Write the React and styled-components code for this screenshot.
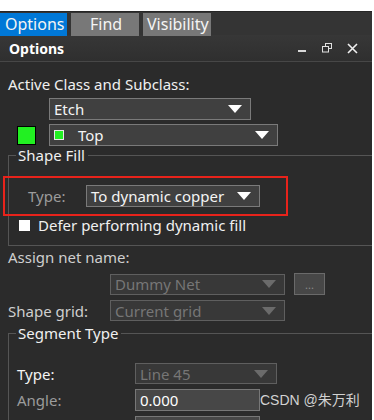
import React from "react";
import styled, { createGlobalStyle } from "styled-components";

const Global = createGlobalStyle`
  body {
    margin: 0;
    background: #ffffff;
    font-family: "Noto Sans", "Open Sans", sans-serif;
  }
`;

const Window = styled.div`
  position: relative;
  width: 372px;
  height: 409px;
  margin-top: 11px;
  background: #2b2b2b;
  overflow: hidden;
  color: #f0f0f0;
  font-size: 14px;
`;

const TabBar = styled.div`
  display: flex;
  gap: 4px;
  height: 24px;
  padding-top: 1px;
  box-sizing: border-box;
  background: #343434;
  border-top: 1px solid #262626;
`;

const Tab = styled.div`
  width: ${p => p.w}px;
  height: 23px;
  box-sizing: border-box;
  padding-left: ${p => p.pad}px;
  line-height: 23px;
  font-size: 16px;
  color: #f4f4f4;
  background: ${p => (p.active ? "#0078d7" : "#787878")};
`;

const TitleBar = styled.div`
  display: flex;
  align-items: center;
  height: 26px;
  padding: 0 14px 0 9px;
  background: linear-gradient(#373737, #2f2f2f);
  border-bottom: 1px solid #474747;
`;

const Title = styled.div`
  flex: 1;
  font-weight: bold;
  font-size: 14px;
  color: #ffffff;
`;

const TitleIcons = styled.div`
  display: flex;
  align-items: center;
  gap: 15px;
  svg {
    display: block;
  }
`;

const Body = styled.div`
  padding: 0;
`;

const Label = styled.div`
  height: 20px;
  line-height: 20px;
  padding-left: 8px;
  margin-top: ${p => p.mt || 0}px;
  font-size: 15px;
  color: ${p => p.color || "#f0f0f0"};
`;

const Row = styled.div`
  display: flex;
  align-items: center;
  gap: ${p => p.gap || 0}px;
  margin-top: ${p => p.mt || 0}px;
  padding-left: ${p => p.pl || 0}px;
`;

const Select = styled.div`
  display: flex;
  align-items: center;
  width: ${p => p.w}px;
  height: ${p => p.h || 22}px;
  box-sizing: border-box;
  padding: 0 8px 0 4px;
  border: 1px solid ${p => (p.disabled ? "#5f5f5f" : "#7a7a7a")};
  background: ${p => (p.disabled ? "#383838" : "#404040")};
  color: ${p => (p.disabled ? "#767676" : "#f4f4f4")};
  font-size: 15px;
  white-space: nowrap;
  span {
    flex: 1;
  }
`;

const Arrow = styled.i`
  width: 0;
  height: 0;
  border-left: 7px solid transparent;
  border-right: 7px solid transparent;
  border-top: 8px solid ${p => (p.disabled ? "#6b6b6b" : "#ffffff")};
`;

const Swatch = styled.div`
  width: ${p => p.size}px;
  height: ${p => p.size}px;
  box-sizing: border-box;
  border: ${p => p.bw}px solid ${p => p.bc};
  background: #22f022;
  flex: none;
`;

const Group = styled.fieldset`
  margin: ${p => p.mt}px 0 0 8px;
  padding: 0 0 ${p => p.pb || 0}px 0;
  border: 1px solid #555555;
  border-right: none;
  min-width: 0;
`;

const Legend = styled.legend`
  margin-left: 7px;
  padding: 0 3px 0 2px;
  line-height: 20px;
  font-size: 15px;
  color: #f0f0f0;
`;

const Highlight = styled.div`
  display: flex;
  align-items: center;
  width: 285px;
  height: 40px;
  box-sizing: border-box;
  margin: 11px 0 0 -6px;
  padding-left: 23px;
  border: 2px solid #e8231b;
  font-size: 15px;
`;

const FieldName = styled.div`
  width: ${p => p.w}px;
  color: ${p => p.color || "#f4f4f4"};
  font-size: 15px;
  flex: none;
`;

const CheckRow = styled.div`
  display: flex;
  align-items: center;
  gap: 8px;
  height: 18px;
  padding-left: 10px;
  font-size: 15px;
`;

const Check = styled.div`
  width: 11px;
  height: 11px;
  background: #ffffff;
`;

const DotsButton = styled.div`
  width: 31px;
  height: 22px;
  box-sizing: border-box;
  border: 1px solid #6a6a6a;
  background: #474747;
  color: #8a8a8a;
  font-size: 11px;
  text-align: center;
  line-height: 22px;
`;

const Input = styled.div`
  width: 125px;
  height: 22px;
  box-sizing: border-box;
  padding-left: 4px;
  border: 1px solid #777777;
  background: #474747;
  color: #ffffff;
  font-size: 15px;
  line-height: 20px;
`;

const Watermark = styled.div`
  position: absolute;
  left: 260px;
  top: 378px;
  font-family: "Liberation Sans", "Noto Sans CJK SC", sans-serif;
  font-size: 14px;
  color: #d2d2d2;
`;

const Minimize = () => (
  <svg width="9" height="10" viewBox="0 0 9 10">
    <rect x="0" y="7" width="8" height="2" fill="#d8d8d8" />
  </svg>
);

const Restore = () => (
  <svg width="10" height="10" viewBox="0 0 10 10">
    <rect x="3.5" y="0.5" width="6" height="5" fill="none" stroke="#e0e0e0" />
    <rect x="0.5" y="3.5" width="6" height="5.5" fill="#303030" stroke="#e0e0e0" />
  </svg>
);

const Close = () => (
  <svg width="11" height="11" viewBox="0 0 11 11">
    <path d="M1 1 L10 10 M10 1 L1 10" stroke="#f0f0f0" strokeWidth="1.6" />
  </svg>
);

const DIM = "#9c9c9c";
const SOFT = "#cfcfcf";

export default function App() {
  return (
    <>
      <Global />
      <Window>
        <TabBar>
          <Tab active w={67} pad={5}>Options</Tab>
          <Tab w={68} pad={19}>Find</Tab>
          <Tab w={68} pad={4}>Visibility</Tab>
        </TabBar>
        <TitleBar>
          <Title>Options</Title>
          <TitleIcons>
            <Minimize />
            <Restore />
            <Close />
          </TitleIcons>
        </TitleBar>
        <Body>
          <Label mt={12}>Active Class and Subclass:</Label>
          <Row mt={4} pl={49}>
            <Select w={202}>
              <span>Etch</span>
              <Arrow />
            </Select>
          </Row>
          <Row mt={4} pl={17} gap={13}>
            <Swatch size={19} bw={1} bc="#000" />
            <Select w={229}>
              <Swatch size={10} bw={1} bc="#e8e8e8" />
              <span style={{ paddingLeft: 14 }}>Top</span>
              <Arrow />
            </Select>
          </Row>

          <Group mt={-1} pb={11}>
            <Legend>Shape Fill</Legend>
            <Highlight>
              <FieldName w={58} color={DIM}>Type:</FieldName>
              <Select w={174}>
                <span>To dynamic copper</span>
                <Arrow />
              </Select>
            </Highlight>
            <CheckRow>
              <Check />
              Defer performing dynamic fill
            </CheckRow>
          </Group>

          <Label mt={1} color={SOFT}>Assign net name:</Label>
          <Row mt={6} pl={110} gap={9}>
            <Select w={175} h={21} disabled>
              <span>Dummy Net</span>
              <Arrow disabled />
            </Select>
            <DotsButton>...</DotsButton>
          </Row>
          <Row mt={5} pl={8}>
            <FieldName w={102} color={SOFT}>Shape grid:</FieldName>
            <Select w={175} h={21} disabled>
              <span>Current grid</span>
              <Arrow disabled />
            </Select>
          </Row>

          <Group mt={2}>
            <Legend>Segment Type</Legend>
            <Row mt={20} pl={8}>
              <FieldName w={118}>Type:</FieldName>
              <Select w={142} h={21} disabled>
                <span>Line 45</span>
                <Arrow disabled />
              </Select>
            </Row>
            <Row mt={5} pl={8}>
              <FieldName w={118} color={DIM}>Angle:</FieldName>
              <Input>0.000</Input>
            </Row>
            <Row mt={5} pl={8}>
              <FieldName w={118} color={DIM}>Arc radius:</FieldName>
              <Input />
            </Row>
          </Group>
        </Body>
        <Watermark>CSDN @朱万利</Watermark>
      </Window>
    </>
  );
}
